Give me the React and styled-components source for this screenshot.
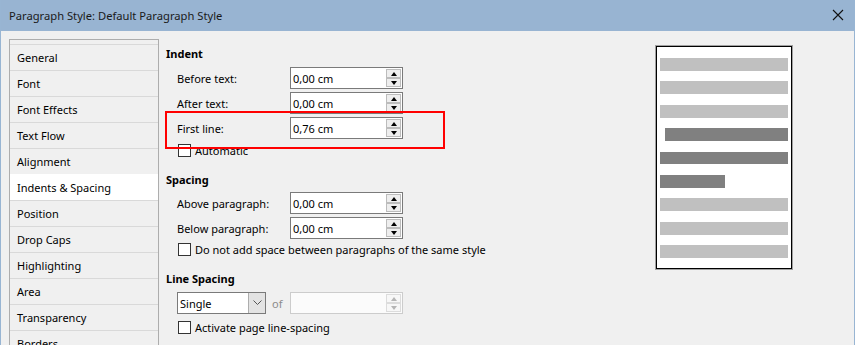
import React from "react";
import styled, { createGlobalStyle } from "styled-components";

const Global = createGlobalStyle`
  html, body { margin: 0; padding: 0; background: #f0f0f0; }
  body { font-family: "Noto Sans", "Open Sans", sans-serif; font-size: 11px; color: #000; }
  * { box-sizing: border-box; }
`;

const Window = styled.div`
  width: 855px;
  height: 345px;
  display: flex;
  flex-direction: column;
  background: #f0f0f0;
  border-left: 1px solid #98b5d3;
  border-right: 1px solid #98b5d3;
  overflow: hidden;
`;

const TitleBar = styled.div`
  height: 31px;
  flex: none;
  background: #98b4d2;
  display: flex;
  align-items: center;
  padding-left: 8px;
  padding-right: 10px;
  justify-content: space-between;
`;

const Title = styled.div`
  font-size: 11.2px;
  line-height: 16px;
  color: #1a1a1a;
`;

const CloseBtn = styled.div`
  width: 12px;
  height: 12px;
  display: flex;
  margin-top: -1px;
`;

const Body = styled.div`
  flex: 1;
  display: flex;
  padding-top: 8px;
  min-height: 0;
`;

const Sidebar = styled.div`
  width: 150px;
  margin-left: 8px;
  flex: none;
  border: 1px solid #adadad;
  border-bottom: none;
  padding-top: 4px;
  background: #f0f0f0;
  align-self: flex-start;
`;

const NavItem = styled.div`
  height: 26px;
  border-top: 1px solid ${(p) => (p.$active ? "#ffffff" : "#d9d9d9")};
  padding-left: 7px;
  display: flex;
  align-items: center;
  line-height: 16px;
  background: ${(p) => (p.$active ? "#ffffff" : "transparent")};
`;

const Content = styled.div`
  position: relative;
  flex: 1;
  display: flex;
  margin-left: 7px;
`;

const Form = styled.div`
  display: flex;
  flex-direction: column;
  width: 420px;
`;

const Header = styled.div`
  font-weight: bold;
  line-height: 16px;
  height: 16px;
  margin-top: ${(p) => p.$mt}px;
`;

const Rows = styled.div`
  display: flex;
  flex-direction: column;
  gap: 3px;
  margin-top: ${(p) => p.$mt}px;
  padding-left: 11px;
`;

const Row = styled.div`
  display: flex;
  align-items: center;
  height: 22px;
`;

const Label = styled.div`
  width: 113px;
  line-height: 16px;
  padding-top: 1px;
`;

const Field = styled.div`
  width: 113px;
  height: 22px;
  border: 1px solid ${(p) => (p.$disabled ? "#cccccc" : "#7a7a7a")};
  background: ${(p) => (p.$disabled ? "#fbfbfb" : "#ffffff")};
  display: flex;
  align-items: center;
  justify-content: space-between;
  padding-left: 2px;
`;

const Value = styled.span`
  line-height: 16px;
  padding-top: 1px;
`;

const Spin = styled.div`
  display: flex;
  flex-direction: column;
  margin-right: 1px;
  height: 20px;
  justify-content: center;
`;

const SpinBtn = styled.div`
  width: 15px;
  height: 9px;
  border: 1px solid ${(p) => (p.$disabled ? "#dcdcdc" : "#bcbcbc")};
  background: ${(p) => (p.$disabled ? "#f7f7f7" : "#eeeeee")};
  display: flex;
  align-items: center;
  justify-content: center;
`;

const Arrow = styled.div`
  width: 0;
  height: 0;
  border-left: 3.5px solid transparent;
  border-right: 3.5px solid transparent;
  ${(p) =>
    p.$up
      ? `border-bottom: 4px solid ${p.$disabled ? "#b5b5b5" : "#000"};`
      : `border-top: 4px solid ${p.$disabled ? "#b5b5b5" : "#000"};`}
`;

const CheckRow = styled.label`
  display: flex;
  align-items: center;
  height: 16px;
  gap: 4px;
  padding-left: 12px;
  margin-top: ${(p) => p.$mt}px;
  line-height: 16px;
`;

const CheckText = styled.span`
  padding-top: 2px;
`;

const Box = styled.span`
  width: 13px;
  height: 13px;
  border: 1px solid #333333;
  background: #ffffff;
  flex: none;
`;

const Select = styled.div`
  width: 89px;
  height: 22px;
  border: 1px solid #7a7a7a;
  background: #ffffff;
  display: flex;
  align-items: center;
  justify-content: space-between;
  padding-left: 2px;
`;

const DropBtn = styled.div`
  width: 17px;
  height: 20px;
  background: #e3e3e3;
  border-left: 1px solid #adadad;
  display: flex;
  align-items: center;
  justify-content: center;
`;

const OfText = styled.span`
  color: #8c8c8c;
  width: 24px;
  padding-left: 6px;
  line-height: 16px;
  padding-top: 1px;
`;

const Preview = styled.div`
  margin-left: auto;
  margin-right: 61px;
  margin-top: 6px;
  width: 138px;
  height: 225px;
  border: 1px solid #a0a0a0;
  box-shadow: inset 0 0 0 1px #000;
  background: #fff;
  padding: 12px 4px 0 4px;
  display: flex;
  flex-direction: column;
  gap: 10.5px;
  flex: none;
`;

const Bar = styled.div`
  height: 12.9px;
  background: ${(p) => (p.$dark ? "#808080" : "#c0c0c0")};
  margin-left: ${(p) => p.$indent || 0}px;
  width: ${(p) => (p.$short ? "65px" : "auto")};
`;

const Highlight = styled.div`
  position: absolute;
  left: -1px;
  top: 72px;
  width: 280px;
  height: 38px;
  border: 2px solid #ff0000;
  pointer-events: none;
`;

function SpinField({ value, disabled }) {
  return (
    <Field $disabled={disabled}>
      <Value>{value}</Value>
      <Spin>
        <SpinBtn $disabled={disabled}>
          <Arrow $up $disabled={disabled} />
        </SpinBtn>
        <SpinBtn $disabled={disabled}>
          <Arrow $disabled={disabled} />
        </SpinBtn>
      </Spin>
    </Field>
  );
}

const nav = [
  "General",
  "Font",
  "Font Effects",
  "Text Flow",
  "Alignment",
  "Indents & Spacing",
  "Position",
  "Drop Caps",
  "Highlighting",
  "Area",
  "Transparency",
  "Borders",
];

export default function App() {
  return (
    <>
      <Global />
      <Window>
        <TitleBar>
          <Title>Paragraph Style: Default Paragraph Style</Title>
          <CloseBtn>
            <svg width="12" height="12" viewBox="0 0 12 12">
              <path d="M1 1 L11 11 M11 1 L1 11" stroke="#111" strokeWidth="1.1" fill="none" />
            </svg>
          </CloseBtn>
        </TitleBar>
        <Body>
          <Sidebar>
            {nav.map((n) => (
              <NavItem key={n} $active={n === "Indents & Spacing"}>
                {n}
              </NavItem>
            ))}
          </Sidebar>
          <Content>
            <Form>
              <Header $mt={7}>Indent</Header>
              <Rows $mt={5}>
                <Row>
                  <Label>Before text:</Label>
                  <SpinField value="0,00 cm" />
                </Row>
                <Row>
                  <Label>After text:</Label>
                  <SpinField value="0,00 cm" />
                </Row>
                <Row>
                  <Label>First line:</Label>
                  <SpinField value="0,76 cm" />
                </Row>
              </Rows>
              <CheckRow $mt={3}>
                <Box />
                <CheckText>Automatic</CheckText>
              </CheckRow>
              <Header $mt={14}>Spacing</Header>
              <Rows $mt={4}>
                <Row>
                  <Label>Above paragraph:</Label>
                  <SpinField value="0,00 cm" />
                </Row>
                <Row>
                  <Label>Below paragraph:</Label>
                  <SpinField value="0,00 cm" />
                </Row>
              </Rows>
              <CheckRow $mt={2}>
                <Box />
                <CheckText>Do not add space between paragraphs of the same style</CheckText>
              </CheckRow>
              <Header $mt={14}>Line Spacing</Header>
              <Rows $mt={5}>
                <Row>
                  <Select>
                    <Value>Single</Value>
                    <DropBtn>
                      <svg width="9" height="6" viewBox="0 0 9 6">
                        <path d="M0.5 0.5 L4.5 4.5 L8.5 0.5" stroke="#555" strokeWidth="1" fill="none" />
                      </svg>
                    </DropBtn>
                  </Select>
                  <OfText>of</OfText>
                  <SpinField value="" disabled />
                </Row>
              </Rows>
              <CheckRow $mt={5}>
                <Box />
                <CheckText>Activate page line-spacing</CheckText>
              </CheckRow>
            </Form>
            <Highlight />
            <Preview>
              <Bar />
              <Bar />
              <Bar />
              <Bar $dark $indent={5} />
              <Bar $dark />
              <Bar $dark $short />
              <Bar />
              <Bar />
              <Bar />
            </Preview>
          </Content>
        </Body>
      </Window>
    </>
  );
}
